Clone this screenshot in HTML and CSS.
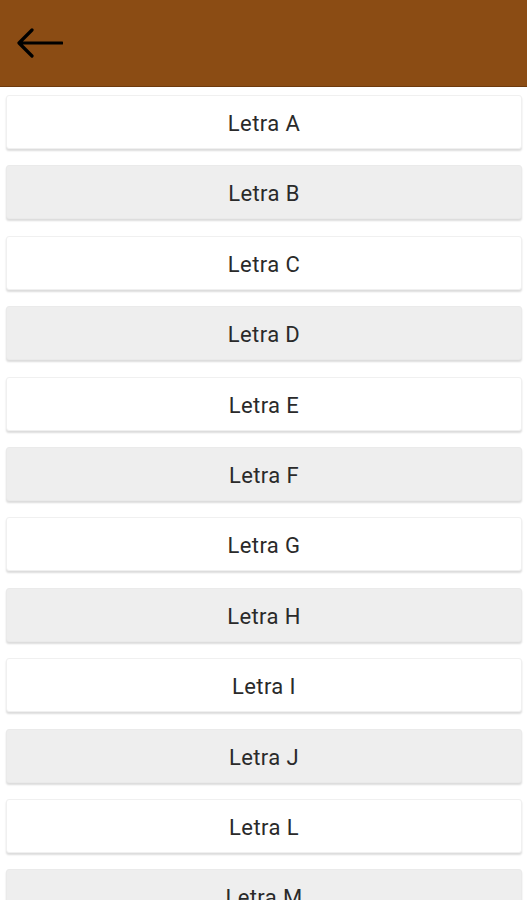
FILE: index.html
```html
<!DOCTYPE html>
<html lang="es">
<head>
    <meta charset="UTF-8">
    <meta name="viewport" content="width=device-width, initial-scale=1.0">
    <title>Letras</title>
    <link rel="stylesheet" href="styles.css">
</head>
<body>
    <header class="toolbar">
        <button class="back-btn" aria-label="Volver">
            <svg width="48" height="32" viewBox="0 0 48 32">
                <path d="M47 15H5M17 2L4 15L17 28" fill="none" stroke="#000" stroke-width="3.2" stroke-linecap="round" stroke-linejoin="round"/>
            </svg>
        </button>
    </header>

    <div class="lista">
        <div class="item">Letra A</div>
        <div class="item gris">Letra B</div>
        <div class="item">Letra C</div>
        <div class="item gris">Letra D</div>
        <div class="item">Letra E</div>
        <div class="item gris">Letra F</div>
        <div class="item">Letra G</div>
        <div class="item gris">Letra H</div>
        <div class="item">Letra I</div>
        <div class="item gris">Letra J</div>
        <div class="item">Letra L</div>
        <div class="item gris">Letra M</div>
    </div>
</body>
</html>
```

FILE: styles.css
```css
body {
    font-family: Roboto, "Liberation Sans", sans-serif;
    background-color: #fff;
    margin: 0;
    padding: 0;
    overflow: hidden;
}

.toolbar {
    height: 87px;
    background-color: #8b4c14;
    border-bottom: 1px solid #6e3a0e;
    display: flex;
    align-items: center;
    padding-left: 15px;
    box-sizing: border-box;
}

.back-btn {
    background: none;
    border: none;
    padding: 0;
    margin-top: 2px;
    display: flex;
    cursor: pointer;
}

.lista {
    display: flex;
    flex-direction: column;
    gap: 16.4px;
    padding: 8px 5px 0 6px;
}

.item {
    height: 54px;
    display: flex;
    align-items: center;
    justify-content: center;
    padding-top: 3px;
    background-color: #fff;
    border: 1px solid #f0f0f0;
    border-radius: 3px;
    box-shadow: 0 2px 2px rgba(0, 0, 0, 0.14);
    box-sizing: border-box;
    font-size: 22px;
    letter-spacing: 0.4px;
    color: #2a2a2a;
    flex-shrink: 0;
}

.item.gris {
    background-color: #eeeeee;
    border-color: #eaeaea;
}
```
